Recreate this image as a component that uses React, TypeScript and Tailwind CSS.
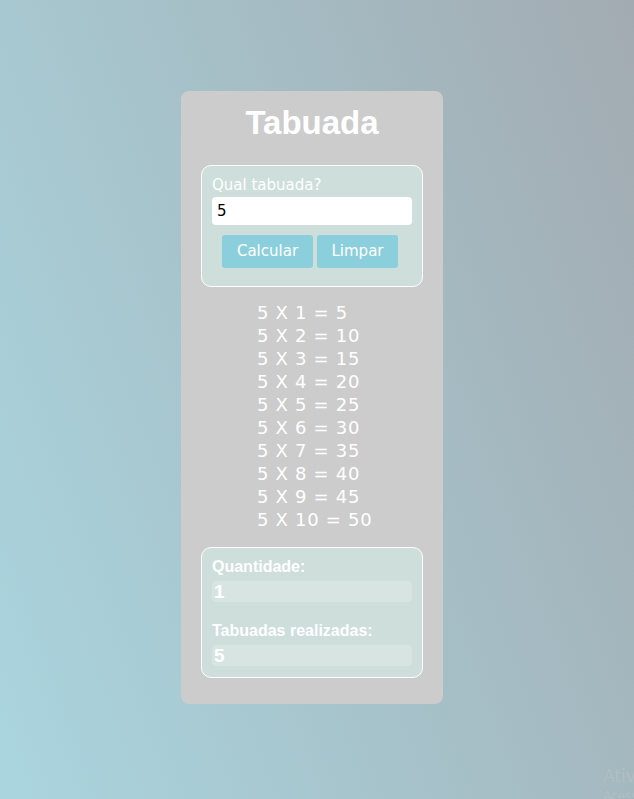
import React, { useState } from 'react';

const font = { fontFamily: '"DejaVu Sans", Verdana, sans-serif' };
const arial = { fontFamily: '"Liberation Sans", Arial, sans-serif' };

export default function App() {
  const [numero, setNumero] = useState('5');
  const [linhas, setLinhas] = useState<number[]>([1, 2, 3, 4, 5, 6, 7, 8, 9, 10]);
  const [quantidade, setQuantidade] = useState(1);
  const [realizadas, setRealizadas] = useState('5');

  const n = Number(realizadas) || 0;

  function calcular() {
    setLinhas([1, 2, 3, 4, 5, 6, 7, 8, 9, 10]);
    setQuantidade((q) => q + 1);
    setRealizadas((r) => (r ? r + ', ' + numero : numero));
  }

  function limpar() {
    setLinhas([]);
    setNumero('');
  }

  return (
    <div
      className="relative min-h-screen w-full overflow-hidden bg-[linear-gradient(70deg,#aad5df,#a2abb1)] pt-[91px]"
      style={font}
    >
      <div className="flex justify-center pr-[10px]">
        <div className="flex w-[262px] flex-col items-center rounded-lg bg-[#cccccc] px-5 pb-[26px] pt-[10px]">
          <h1 className="text-[33px] font-bold leading-[44px] text-white" style={arial}>
            Tabuada
          </h1>

          <div className="mt-[20px] flex w-[222px] flex-col rounded-[10px] border border-white bg-[#cddedb] px-[10px] pb-[18px] pt-[9px]">
            <label className="text-[15px] leading-[20px] text-white">Qual tabuada?</label>
            <input
              value={numero}
              onChange={(e) => setNumero(e.target.value)}
              className="mt-[2px] h-[28px] w-[200px] rounded-[4px] bg-white px-[5px] text-[15px] text-black outline-none"
            />
            <div className="mt-[10px] flex justify-center gap-[4px] pr-[4px]">
              <button
                onClick={calcular}
                className="h-[33px] w-[91px] rounded-[3px] bg-[#8ccfdc] text-[15px] text-white"
              >
                Calcular
              </button>
              <button
                onClick={limpar}
                className="h-[33px] w-[81px] rounded-[3px] bg-[#8ccfdc] text-[15px] text-white"
              >
                Limpar
              </button>
            </div>
          </div>

          <ul className="mt-[14px] h-[246px] w-full pl-[56px] text-[18px] leading-[23px] tracking-[0.7px] text-white">
            {linhas.map((i) => (
              <li key={i}>
                {n} X {i} = {n * i}
              </li>
            ))}
          </ul>

          <div
            className="flex w-[222px] flex-col rounded-[10px] border border-white bg-[#cddedb] px-[10px] pb-[11px] pt-[9px]"
            style={arial}
          >
            <span className="text-[16px] font-bold leading-[20px] text-white">Quantidade:</span>
            <div className="mt-[4px] h-[21px] w-[200px] rounded-[4px] bg-[#d8e4e2] pl-[2px] text-[19px] font-bold leading-[21px] text-white">
              {quantidade}
            </div>
            <span className="mt-[19px] text-[16px] font-bold leading-[20px] text-white">
              Tabuadas realizadas:
            </span>
            <div className="mt-[4px] h-[21px] w-[200px] rounded-[4px] bg-[#d8e4e2] pl-[2px] text-[19px] font-bold leading-[21px] text-white">
              {realizadas}
            </div>
          </div>
        </div>
      </div>

      <div className="pointer-events-none absolute left-[603px] top-[766px] whitespace-nowrap text-[17px] leading-[20px] text-[#b2bec2]">
        Ativar o Windows
        <div className="text-[12px] text-[#b2bec2]">Acesse Configurações</div>
      </div>
    </div>
  );
}
